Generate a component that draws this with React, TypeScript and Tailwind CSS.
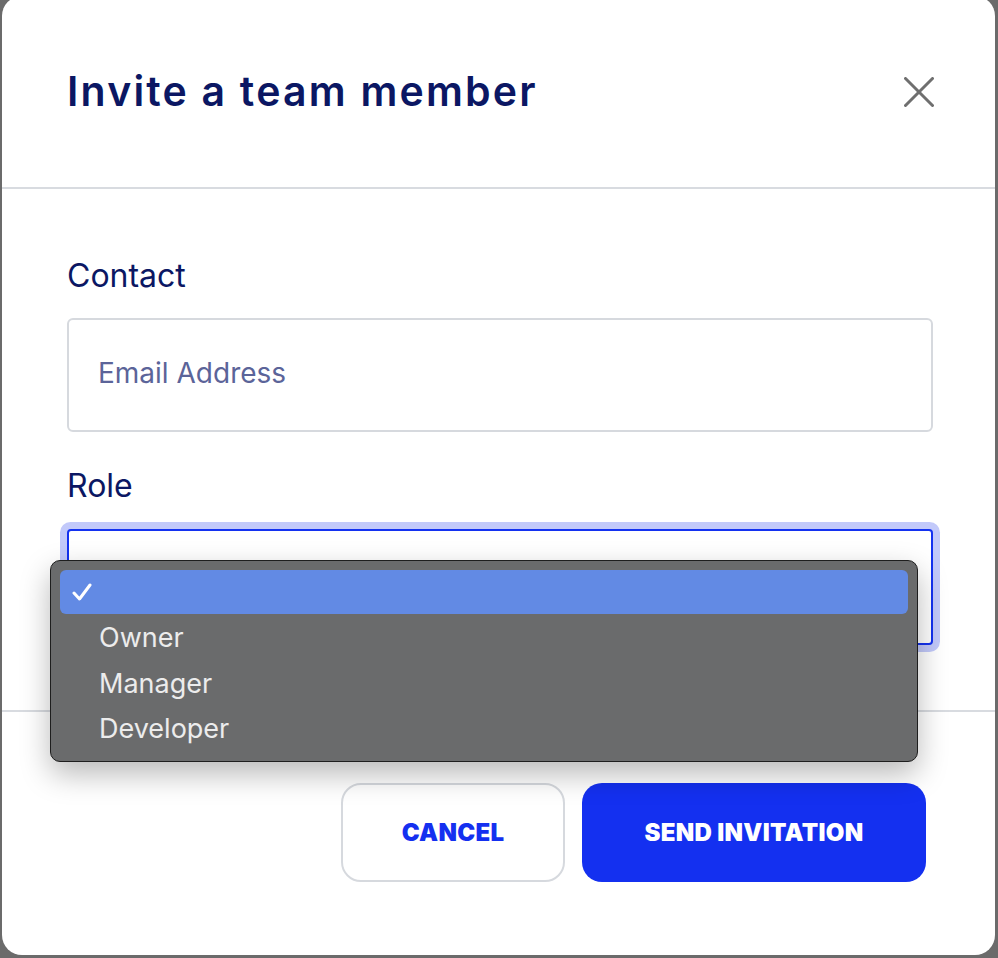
import { useState } from 'react';

const roles = ['', 'Owner', 'Manager', 'Developer'];

function CloseIcon() {
  return (
    <svg width="30" height="30" viewBox="0 0 30 30" fill="none" stroke="#6f6f6f" strokeWidth="3" strokeLinecap="round">
      <path d="M1.5 1.5 L28.5 28.5" />
      <path d="M28.5 1.5 L1.5 28.5" />
    </svg>
  );
}

function CheckIcon() {
  return (
    <svg width="20" height="18" viewBox="0 0 20 18" fill="none" stroke="#ffffff" strokeWidth="3" strokeLinecap="round" strokeLinejoin="round">
      <path d="M2 10 L7.5 16 L18 2" />
    </svg>
  );
}

export default function App() {
  const [role] = useState('');

  return (
    <div className="w-[998px] h-[958px] bg-[#6b6b6b] overflow-hidden pl-[2px] pr-[3px] pb-[3px] flex flex-col font-['Inter',sans-serif]">
      <div className="flex-1 -mt-[4px] bg-white rounded-[20px] flex flex-col">
        {/* Header */}
        <div className="h-[193px] shrink-0 pl-[65px] pr-[61px] flex items-center justify-between border-b-2 border-[#d8dbe0]">
          <h2 className="text-[41px] font-semibold text-[#0b1763] tracking-[2.2px]">Invite a team member</h2>
          <button className="w-[30px] h-[30px]">
            <CloseIcon />
          </button>
        </div>

        {/* Body */}
        <div className="pl-[65px] pr-[62px] pt-[68px] pb-[65px] border-b-2 border-[#d8dbe0] flex flex-col">
          <label className="text-[32px] leading-[38px] text-[#0b1763]">Contact</label>
          <div className="mt-[23px] h-[114px] border-2 border-[#d6d9de] rounded-[6px] flex items-center px-[29px] pb-[4px]">
            <span className="text-[28px] text-[#5b6499]">Email Address</span>
          </div>

          <label className="mt-[35px] text-[32px] leading-[38px] text-[#0b1763]">Role</label>
          <div className="relative mt-[24px]">
            <div className="h-[116px] border-2 border-[#1432f0] rounded-[4px] ring-[7px] ring-[#c2c9fa] bg-white" />

            {/* native-looking select popup */}
            <div className="absolute left-[-17px] top-[31px] w-[868px] h-[202px] rounded-[10px] bg-[#6a6b6c] border border-[#1e1e1e] shadow-[0_12px_30px_rgba(0,0,0,0.28)] p-[9px] flex flex-col">
              {roles.map((r) => {
                const active = r === role;
                return (
                  <div
                    key={r || 'blank'}
                    className={
                      active
                        ? 'h-[44px] mb-[2px] rounded-[6px] bg-[#628ae4] flex items-center pl-[12px]'
                        : 'h-[46px] flex items-center pl-[39px]'
                    }
                  >
                    {active ? (
                      <CheckIcon />
                    ) : (
                      <span className="text-[27px] text-[#ececec]">{r}</span>
                    )}
                  </div>
                );
              })}
            </div>
          </div>
        </div>

        {/* Footer */}
        <div className="flex-1 flex justify-end items-start gap-[17px] pt-[71px] pr-[69px]">
          <button className="w-[224px] h-[99px] rounded-[20px] border-2 border-[#d6d9de] bg-white text-[#1430f0] text-[24px] font-black tracking-[0.3px]">
            CANCEL
          </button>
          <button className="w-[344px] h-[99px] rounded-[20px] bg-[#1430f0] text-white text-[24px] font-black tracking-[0.3px]">
            SEND INVITATION
          </button>
        </div>
      </div>
    </div>
  );
}
